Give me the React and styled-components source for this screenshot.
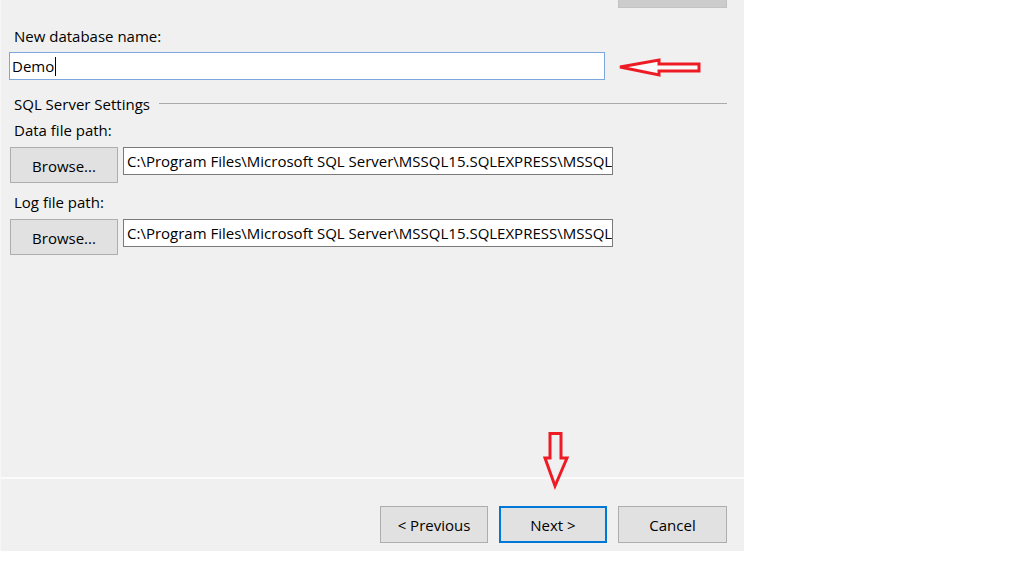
import React from "react";
import styled, { createGlobalStyle } from "styled-components";

const Global = createGlobalStyle`
  html, body {
    margin: 0;
    padding: 0;
    background: #ffffff;
  }
  body {
    font-family: "Open Sans", "Noto Sans", "Liberation Sans", sans-serif;
    color: #000;
  }
`;

const Panel = styled.div`
  position: relative;
  width: 744px;
  height: 551px;
  background: #f0f0f0;
  display: flex;
  flex-direction: column;
  box-sizing: border-box;
  border-left: 1px solid #f7f7f7;
`;

const Content = styled.div`
  height: 477px;
  box-sizing: border-box;
  padding: 0 17px 0 8px;
  display: flex;
  flex-direction: column;
`;

const TopStub = styled.div`
  display: flex;
  justify-content: flex-end;
  height: 8px;
`;

const StubButton = styled.div`
  width: 109px;
  height: 8px;
  background: #cccccc;
  border: 1px solid #c2c2c2;
  border-top: none;
  box-sizing: border-box;
`;

const Label = styled.div`
  font-size: 15px;
  line-height: 20px;
  padding-left: 5px;
  margin-top: ${(p) => p.mt}px;
`;

const NameBox = styled.div`
  width: 596px;
  height: 28px;
  margin-top: 6px;
  box-sizing: border-box;
  background: #fff;
  border: 1px solid #7aa7dc;
  font-size: 15px;
  line-height: 26px;
  padding-left: 2px;
  display: flex;
  align-items: center;
`;

const Caret = styled.span`
  display: inline-block;
  width: 1px;
  height: 19px;
  background: #000;
  margin-left: 1px;
`;

const GroupHeader = styled.div`
  display: flex;
  align-items: center;
  margin-top: 14px;
  padding-left: 5px;
  font-size: 15px;
  line-height: 20px;
  gap: 9px;
`;

const GroupLine = styled.div`
  flex: 1;
  height: 1px;
  background: #aaaaaa;
  margin-top: -1px;
`;

const PathRow = styled.div`
  display: flex;
  align-items: flex-start;
  gap: 5px;
  margin-top: 7px;
  padding-left: 1px;
`;

const Button = styled.div`
  width: ${(p) => p.w || 108}px;
  height: ${(p) => p.h || 36}px;
  box-sizing: border-box;
  background: #e1e1e1;
  border: ${(p) => (p.primary ? "2px solid #0078d7" : "1px solid #adadad")};
  font-size: 15px;
  display: flex;
  align-items: center;
  justify-content: center;
  padding-top: 1px;
`;

const PathBox = styled.div`
  width: 490px;
  height: 28px;
  box-sizing: border-box;
  background: #fff;
  border: 1px solid #7a7a7a;
  font-size: 15px;
  line-height: 26px;
  padding-left: 3px;
  white-space: nowrap;
  overflow: hidden;
`;

const Footer = styled.div`
  border-top: 2px solid #fbfbfb;
  flex: 1;
  display: flex;
  justify-content: flex-end;
  align-items: flex-start;
  gap: 11px;
  padding: 27px 17px 0 0;
`;

const Annotation = styled.svg`
  position: absolute;
  left: ${(p) => p.x}px;
  top: ${(p) => p.y}px;
  overflow: visible;
`;

const PATH = "C:\\Program Files\\Microsoft SQL Server\\MSSQL15.SQLEXPRESS\\MSSQL\\DATA\\";

const App = () => {
  return (
    <>
      <Global />
      <Panel>
        <Content>
          <TopStub>
            <StubButton />
          </TopStub>
          <Label mt={18}>New database name:</Label>
          <NameBox>
            Demo
            <Caret />
          </NameBox>
          <GroupHeader>
            SQL Server Settings
            <GroupLine />
          </GroupHeader>
          <Label mt={6}>Data file path:</Label>
          <PathRow>
            <Button>Browse...</Button>
            <PathBox>{PATH}</PathBox>
          </PathRow>
          <Label mt={9}>Log file path:</Label>
          <PathRow>
            <Button>Browse...</Button>
            <PathBox>{PATH}</PathBox>
          </PathRow>
        </Content>
        <Footer>
          <Button h={37}>&lt; Previous</Button>
          <Button h={37} primary>Next &gt;</Button>
          <Button h={37} w={109}>Cancel</Button>
        </Footer>

        {/* red left arrow next to the name field */}
        <Annotation x={617} y={58} width="84" height="20">
          <polygon
            points="2,9 41,2 41,6 81,6 81,13 41,13 41,17"
            fill="#fafafa"
            stroke="#ed1c24"
            strokeWidth="3"
            strokeLinejoin="miter"
          />
        </Annotation>

        {/* red down arrow above Next */}
        <Annotation x={541} y={432} width="28" height="58">
          <polygon
            points="8,1.5 19,1.5 19,26 25,26 13,54 3,26 8,26"
            fill="none"
            stroke="#ed1c24"
            strokeWidth="3"
            strokeLinejoin="miter"
          />
        </Annotation>
      </Panel>
    </>
  );
};

export default App;
